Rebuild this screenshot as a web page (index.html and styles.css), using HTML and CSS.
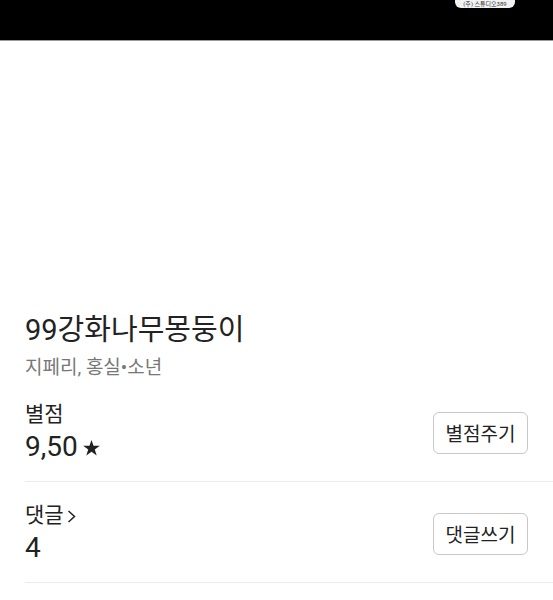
FILE: index.html
```html
<!DOCTYPE html>
<html lang="ko">
<head>
  <meta charset="UTF-8" />
  <title>99강화나무몽둥이</title>
  <link rel="stylesheet" href="styles.css">
</head>
<body>
  <div class="viewer">
    <span class="watermark">(주) 스튜디오389</span>
  </div>

  <div class="cover"></div>

  <div class="info">
    <h1 class="title">99강화나무몽둥이</h1>
    <p class="authors">지페리, 홍실•소년</p>

    <div class="row">
      <div class="stat">
        <div class="label">별점</div>
        <div class="value">9,50<svg class="star" width="17" height="16" viewBox="0 0 24 23"><path d="M12 0l2.9 8.4H24l-7.3 5.3 2.8 8.6L12 17l-7.5 5.3 2.8-8.6L0 8.4h9.1z" fill="#222"/></svg></div>
      </div>
      <button class="action">별점주기</button>
    </div>

    <div class="row">
      <div class="stat">
        <div class="label">댓글<svg class="chev" width="9" height="13" viewBox="0 0 9 13"><path d="M1.5 1l6 5.5-6 5.5" fill="none" stroke="#222" stroke-width="1.5"/></svg></div>
        <div class="value">4</div>
      </div>
      <button class="action">댓글쓰기</button>
    </div>
  </div>
</body>
</html>
```

FILE: styles.css
```css
body {
  margin: 0;
  font-family: Roboto, 'Noto Sans CJK KR', sans-serif;
  background: white;
  color: #222;
}

.viewer {
  position: relative;
  height: 40px;
  background: #000;
  border-bottom: 1px solid #9a9a9a;
  overflow: hidden;
}

.watermark {
  position: absolute;
  top: 0;
  left: 455px;
  width: 60px;
  height: 8px;
  line-height: 8px;
  background: #f2f2f2;
  color: #333;
  border-radius: 0 0 6px 6px;
  font-size: 6px;
  text-align: center;
  white-space: nowrap;
}

.cover {
  height: 271px;
}

.info {
  padding-left: 25px;
}

.title {
  margin: 0;
  font-size: 29px;
  font-weight: 400;
  line-height: 36px;
  color: #222;
}

.authors {
  margin: 8px 0 0;
  font-size: 19px;
  line-height: 24px;
  color: #777;
}

.row {
  display: flex;
  justify-content: space-between;
  align-items: center;
  padding: 21px 25px 17px 0;
  border-bottom: 1px solid #ebebeb;
}

.row + .row {
  padding-top: 20px;
}

.label {
  font-size: 21px;
  line-height: 26px;
  color: #222;
}

.chev {
  margin-left: 3px;
  vertical-align: -1px;
}

.value {
  margin-top: 3px;
  font-size: 28px;
  line-height: 34px;
  color: #222;
}

.star {
  margin-left: 5px;
  vertical-align: 0;
}

.action {
  width: 95px;
  height: 42px;
  background: white;
  border: 1px solid #c8c8c8;
  border-radius: 6px;
  font-family: inherit;
  font-size: 19px;
  color: #222;
  padding: 0;
}
```
